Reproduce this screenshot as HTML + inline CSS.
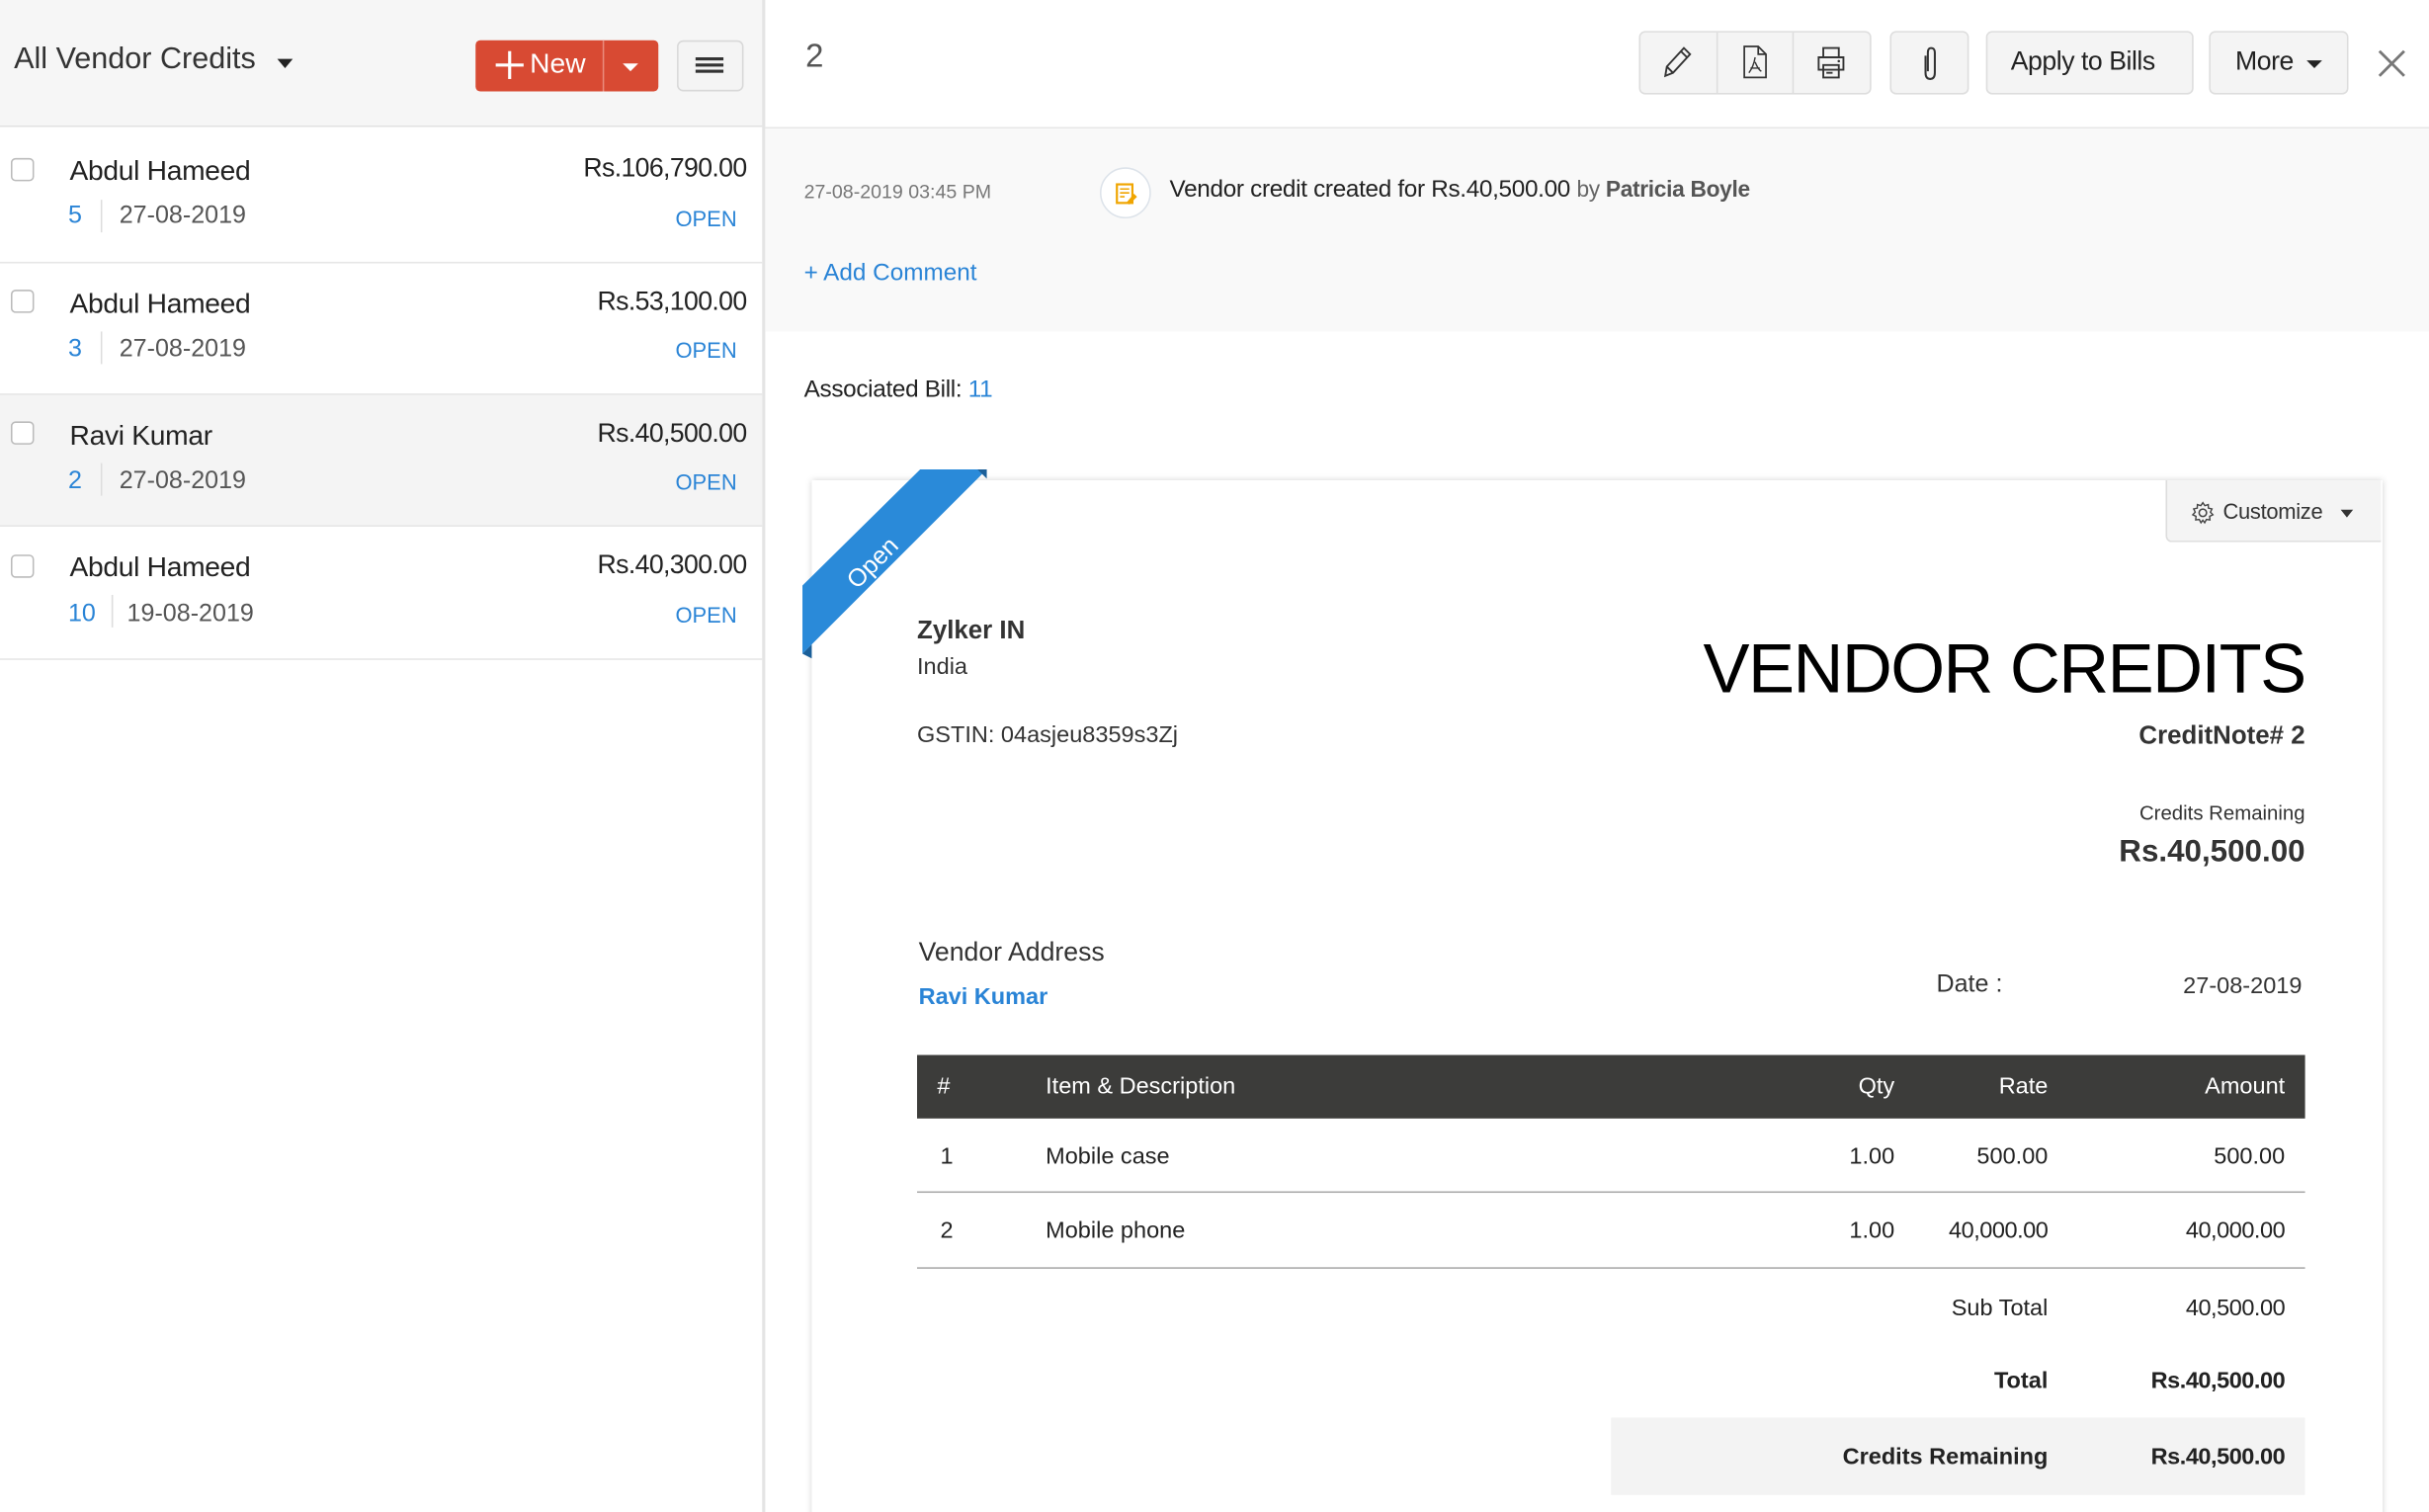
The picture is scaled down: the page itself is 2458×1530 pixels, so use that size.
<!DOCTYPE html>
<html><head><meta charset="utf-8"><style>
*{margin:0;padding:0;box-sizing:border-box}
html,body{width:2458px;height:1530px;overflow:hidden;background:#fff}
#w{position:absolute;left:0;top:0;width:1568px;height:976px;overflow:hidden;transform:scale(1.56760);transform-origin:0 0;font-family:"Liberation Sans",sans-serif;color:#222}
.a{position:absolute;white-space:nowrap;line-height:1}
.r{text-align:right}
.blue{color:#2a84d6}
.cb{position:absolute;left:7px;width:15px;height:15px;border:1px solid #bbb;border-radius:3px;background:#fff}
.btn{position:absolute;top:20px;height:41px;background:#f4f4f4;border:1px solid #ddd;border-radius:4px}
.doc{font-family:"Liberation Sans",sans-serif}
</style></head><body><div id="w">
<div class="a" style="left:0;top:0;width:493px;height:82px;background:#f6f6f6;border-bottom:1px solid #e2e2e2"></div>
<div class="a" style="left:9px;top:29px;font-size:19.5px;color:#333">All Vendor Credits</div>
<div class="a" style="left:179px;top:38px;width:0;height:0;border-left:5px solid transparent;border-right:5px solid transparent;border-top:6px solid #222"></div>
<div class="a" style="left:307px;top:26px;width:118px;height:33px;background:#d84a33;border-radius:3px"></div>
<div class="a" style="left:389px;top:26px;width:1px;height:33px;background:#e98a7a"></div>
<div class="a" style="left:320px;top:41px;width:18px;height:2px;background:#fff"></div>
<div class="a" style="left:328px;top:33px;width:2px;height:18px;background:#fff"></div>
<div class="a" style="left:342px;top:32px;font-size:18px;color:#fff">New</div>
<div class="a" style="left:402px;top:41px;width:0;height:0;border-left:5px solid transparent;border-right:5px solid transparent;border-top:5px solid #fff"></div>
<div class="a" style="left:437px;top:26px;width:43px;height:33px;background:#f4f4f4;border:1px solid #d8d8d8;border-radius:4px"></div>
<div class="a" style="left:449px;top:37px;width:18px;height:2px;background:#333;box-shadow:0 4px 0 #333,0 8px 0 #333"></div>
<div class="a" style="left:492px;top:0;width:2px;height:976px;background:#e4e4e4"></div>

<div class="a" style="left:0;top:169px;width:492px;height:1px;background:#e6e6e6"></div>
<div class="a" style="left:0;top:254px;width:492px;height:86px;background:#f4f4f4;border-top:1px solid #e6e6e6;border-bottom:1px solid #e6e6e6"></div>
<div class="a" style="left:0;top:425px;width:492px;height:1px;background:#e6e6e6"></div>

<div class="cb" style="top:102px"></div>
<div class="a" style="left:45px;top:101px;font-size:18px;letter-spacing:-0.2px">Abdul Hameed</div>
<div class="a r" style="right:1086px;top:100px;font-size:17px;letter-spacing:-0.4px">Rs.106,790.00</div>
<div class="a blue" style="left:44px;top:132px;font-size:16px">5</div>
<div class="a" style="left:65px;top:129px;width:1px;height:21px;background:#ddd"></div>
<div class="a" style="left:77px;top:132px;font-size:16px;color:#555">27-08-2019</div>
<div class="a blue" style="left:436px;top:134px;font-size:14px">OPEN</div>

<div class="cb" style="top:187px"></div>
<div class="a" style="left:45px;top:187px;font-size:18px;letter-spacing:-0.2px">Abdul Hameed</div>
<div class="a r" style="right:1086px;top:186px;font-size:17px;letter-spacing:-0.4px">Rs.53,100.00</div>
<div class="a blue" style="left:44px;top:218px;font-size:16px">3</div>
<div class="a" style="left:65px;top:214px;width:1px;height:21px;background:#ddd"></div>
<div class="a" style="left:77px;top:218px;font-size:16px;color:#555">27-08-2019</div>
<div class="a blue" style="left:436px;top:219px;font-size:14px">OPEN</div>

<div class="cb" style="top:272px"></div>
<div class="a" style="left:45px;top:272px;font-size:18px;letter-spacing:-0.2px">Ravi Kumar</div>
<div class="a r" style="right:1086px;top:271px;font-size:17px;letter-spacing:-0.4px">Rs.40,500.00</div>
<div class="a blue" style="left:44px;top:303px;font-size:16px">2</div>
<div class="a" style="left:65px;top:299px;width:1px;height:21px;background:#ddd"></div>
<div class="a" style="left:77px;top:303px;font-size:16px;color:#555">27-08-2019</div>
<div class="a blue" style="left:436px;top:304px;font-size:14px">OPEN</div>

<div class="cb" style="top:358px"></div>
<div class="a" style="left:45px;top:357px;font-size:18px;letter-spacing:-0.2px">Abdul Hameed</div>
<div class="a r" style="right:1086px;top:356px;font-size:17px;letter-spacing:-0.4px">Rs.40,300.00</div>
<div class="a blue" style="left:44px;top:389px;font-size:16px">10</div>
<div class="a" style="left:72px;top:384px;width:1px;height:21px;background:#ddd"></div>
<div class="a" style="left:82px;top:389px;font-size:16px;color:#555">19-08-2019</div>
<div class="a blue" style="left:436px;top:390px;font-size:14px">OPEN</div>

<div class="a" style="left:520px;top:26px;font-size:21px;color:#555">2</div>
<div class="a" style="left:494px;top:82px;width:1074px;height:1px;background:#e6e6e6"></div>
<div class="btn" style="left:1058px;width:150px"></div>
<div class="a" style="left:1108px;top:21px;width:1px;height:39px;background:#ddd"></div>
<div class="a" style="left:1157px;top:21px;width:1px;height:39px;background:#ddd"></div>
<svg class="a" style="left:1072px;top:28px" width="22" height="24" viewBox="0 0 22 24"><path d="M3 21 L4 15 L15 3 L19 7 L8 19 Z M4 15 L8 19 M13 5 L17 9" fill="none" stroke="#333" stroke-width="1.2"/></svg>
<svg class="a" style="left:1122px;top:28px" width="22" height="24" viewBox="0 0 22 24"><path d="M4 2 H13 L18 7 V22 H4 Z M13 2 V7 H18" fill="none" stroke="#333" stroke-width="1.1"/><path d="M11 9 Q10 15 7 19 M11 12 Q13 17 15 18 M8 16 H14" fill="none" stroke="#333" stroke-width="0.9"/></svg>
<svg class="a" style="left:1171px;top:28px" width="22" height="24" viewBox="0 0 22 24"><path d="M6 9 V3 H16 V9 M3 9 H19 V17 H3 Z M6 14 H16 V22 H6 Z M8 17 H13 M8 19 H12" fill="none" stroke="#333" stroke-width="1.2"/><circle cx="16" cy="11.5" r="0.8" fill="#333"/></svg>
<div class="btn" style="left:1220px;width:51px"></div>
<svg class="a" style="left:1236px;top:29px" width="18" height="24" viewBox="0 0 18 24"><path d="M7 7 V18 Q7 22 10 22 Q13 22 13 18 V5 Q13 2 10.5 2 Q8.5 2 8.5 5 V17" fill="none" stroke="#333" stroke-width="1.3"/></svg>
<div class="btn" style="left:1282px;width:134px"></div>
<div class="a" style="left:1298px;top:31px;font-size:17px;letter-spacing:-0.3px">Apply to Bills</div>
<div class="btn" style="left:1426px;width:90px"></div>
<div class="a" style="left:1443px;top:31px;font-size:17px;letter-spacing:-0.3px">More</div>
<div class="a" style="left:1489px;top:39px;width:0;height:0;border-left:5px solid transparent;border-right:5px solid transparent;border-top:5px solid #222"></div>
<svg class="a" style="left:1534px;top:31px" width="20" height="20" viewBox="0 0 20 20"><path d="M2 2 L18 18 M18 2 L2 18" stroke="#777" stroke-width="1.8"/></svg>

<div class="a" style="left:494px;top:83px;width:1074px;height:131px;background:#f9f9f9"></div>
<div class="a" style="left:519px;top:118px;font-size:12.5px;color:#777">27-08-2019 03:45 PM</div>
<div class="a" style="left:710px;top:108px;width:33px;height:33px;border-radius:50%;background:#fff;border:1px solid #dde3ea"></div>
<svg class="a" style="left:717px;top:115px" width="20" height="20" viewBox="0 0 20 20"><rect x="4" y="4" width="10" height="12" fill="none" stroke="#f0a500" stroke-width="1.4"/><path d="M6 7 H12 M6 9.5 H12 M6 12 H9" stroke="#f0a500" stroke-width="1"/><path d="M10 16 L15 10 L17 12 L12 17 Z" fill="#f0a500"/></svg>
<div class="a" style="left:755px;top:115px;font-size:15.5px;letter-spacing:-0.2px">Vendor credit created for Rs.40,500.00 <span style="color:#666;font-size:14.5px">by <b style="color:#555">Patricia Boyle</b></span></div>
<div class="a blue" style="left:519px;top:169px;font-size:15.5px">+ Add Comment</div>

<div class="a" style="left:519px;top:244px;font-size:15.5px;letter-spacing:-0.2px">Associated Bill: <span class="blue">11</span></div>

<div class="a" style="left:524px;top:310px;width:1014px;height:700px;background:#fff;box-shadow:0 0 4px rgba(0,0,0,0.18)"></div>
<div class="a" style="left:1398px;top:310px;width:139px;height:40px;background:#f4f4f4;border-left:1px solid #ddd;border-bottom:1px solid #ddd;border-bottom-left-radius:4px"></div>
<svg class="a" style="left:1414px;top:323px" width="16" height="16" viewBox="0 0 16 16"><circle cx="8" cy="8" r="2.4" fill="none" stroke="#444"/><path d="M8 1.5 L9.3 3.4 L11.5 2.7 L11.6 5 L13.9 5.5 L12.9 7.6 L14.5 9.3 L12.4 10.3 L12.6 12.6 L10.3 12.3 L9.2 14.4 L8 12.8 L6.8 14.4 L5.7 12.3 L3.4 12.6 L3.6 10.3 L1.5 9.3 L3.1 7.6 L2.1 5.5 L4.4 5 L4.5 2.7 L6.7 3.4 Z" fill="none" stroke="#444" stroke-width="0.9"/></svg>
<div class="a" style="left:1435px;top:323px;font-size:14px;color:#333;letter-spacing:-0.2px">Customize</div>
<div class="a" style="left:1511px;top:329px;width:0;height:0;border-left:4.5px solid transparent;border-right:4.5px solid transparent;border-top:5px solid #333"></div>
<svg class="a" style="left:517px;top:302px" width="125" height="125" viewBox="0 0 125 125"><path d="M1 76 L77 1 L120 1 L1 120 Z" fill="#2a8ad9"/><path d="M1 120 L7 114 L7 123 Z" fill="#1b5f99"/><path d="M114 1 L120 1 L120 7 Z" fill="#1b5f99"/><text x="0" y="0" transform="translate(50 65) rotate(-45)" font-family="Liberation Sans,sans-serif" font-size="16" fill="#fff" text-anchor="middle">Open</text></svg>

<div class="a doc" style="left:592px;top:399px;font-size:16.5px;font-weight:bold;color:#333">Zylker IN</div>
<div class="a doc" style="left:592px;top:423px;font-size:15px;color:#333">India</div>
<div class="a doc" style="left:592px;top:467px;font-size:15px;color:#333">GSTIN: 04asjeu8359s3Zj</div>
<div class="a doc r" style="right:80px;top:409px;font-size:45px;color:#000;letter-spacing:-1px">VENDOR CREDITS</div>
<div class="a doc r" style="right:80px;top:467px;font-size:16.5px;font-weight:bold;color:#333">CreditNote# 2</div>
<div class="a doc r" style="right:80px;top:518px;font-size:13px;color:#333">Credits Remaining</div>
<div class="a doc r" style="right:80px;top:540px;font-size:20px;font-weight:bold;color:#333">Rs.40,500.00</div>
<div class="a doc" style="left:593px;top:606px;font-size:17px;color:#333">Vendor Address</div>
<div class="a doc blue" style="left:593px;top:636px;font-size:15px;font-weight:bold">Ravi Kumar</div>
<div class="a doc" style="left:1250px;top:628px;font-size:16px;color:#333">Date :</div>
<div class="a doc r" style="right:82px;top:629px;font-size:15px;color:#333">27-08-2019</div>

<div class="a" style="left:592px;top:681px;width:896px;height:41px;background:#3c3c3a"></div>
<div class="a doc" style="left:605px;top:694px;font-size:15px;color:#fff">#</div>
<div class="a doc" style="left:675px;top:694px;font-size:15px;color:#fff">Item &amp; Description</div>
<div class="a doc r" style="right:345px;top:694px;font-size:15px;color:#fff">Qty</div>
<div class="a doc r" style="right:246px;top:694px;font-size:15px;color:#fff">Rate</div>
<div class="a doc r" style="right:93px;top:694px;font-size:15px;color:#fff">Amount</div>

<div class="a doc" style="left:607px;top:739px;font-size:15px">1</div>
<div class="a doc" style="left:675px;top:739px;font-size:15px">Mobile case</div>
<div class="a doc r" style="right:345px;top:739px;font-size:15px">1.00</div>
<div class="a doc r" style="right:246px;top:739px;font-size:15px">500.00</div>
<div class="a doc r" style="right:93px;top:739px;font-size:15px">500.00</div>
<div class="a" style="left:592px;top:769px;width:896px;height:1px;background:#aaa"></div>
<div class="a doc" style="left:607px;top:787px;font-size:15px">2</div>
<div class="a doc" style="left:675px;top:787px;font-size:15px">Mobile phone</div>
<div class="a doc r" style="right:345px;top:787px;font-size:15px">1.00</div>
<div class="a doc r" style="right:246px;top:787px;font-size:15px;letter-spacing:-0.3px">40,000.00</div>
<div class="a doc r" style="right:93px;top:787px;font-size:15px;letter-spacing:-0.3px">40,000.00</div>
<div class="a" style="left:592px;top:818px;width:896px;height:1px;background:#aaa"></div>

<div class="a doc r" style="right:246px;top:837px;font-size:15px">Sub Total</div>
<div class="a doc r" style="right:93px;top:837px;font-size:15px;letter-spacing:-0.3px">40,500.00</div>
<div class="a doc r" style="right:246px;top:884px;font-size:15px;font-weight:bold">Total</div>
<div class="a doc r" style="right:93px;top:884px;font-size:15px;font-weight:bold;letter-spacing:-0.3px">Rs.40,500.00</div>
<div class="a" style="left:1040px;top:915px;width:448px;height:50px;background:#f3f3f3"></div>
<div class="a doc r" style="right:246px;top:933px;font-size:15px;font-weight:bold">Credits Remaining</div>
<div class="a doc r" style="right:93px;top:933px;font-size:15px;font-weight:bold;letter-spacing:-0.3px">Rs.40,500.00</div>
</div></body></html>
